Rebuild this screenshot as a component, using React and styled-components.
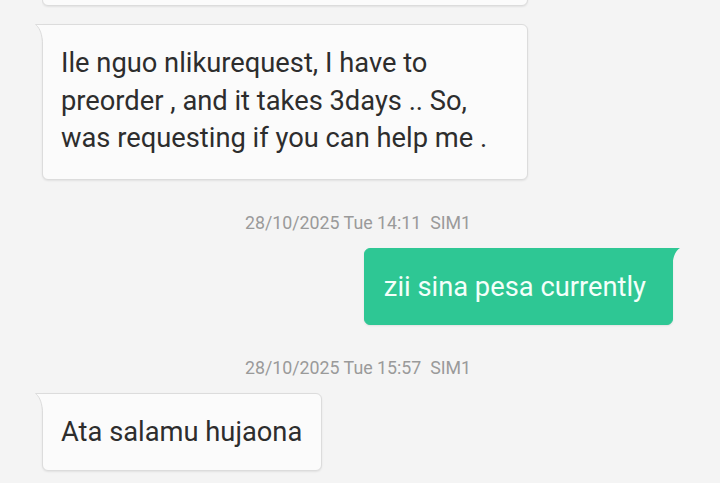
import React from "react";
import styled, { createGlobalStyle } from "styled-components";

const GlobalStyle = createGlobalStyle`
  html, body {
    margin: 0;
    padding: 0;
    background: #f4f4f4;
    font-family: Roboto, "Noto Sans", sans-serif;
  }
`;

const messages = [
  { type: "time", text: "28/10/2025 Tue 14:11\u00a0\u00a0SIM1" },
  { type: "out", text: "zii sina pesa currently" },
  { type: "time", text: "28/10/2025 Tue 15:57\u00a0\u00a0SIM1" },
  { type: "in", text: "Ata salamu hujaona" },
];

// little corner flag on the bubble
const Tail = ({ side }) =>
  side === "in" ? (
    <TailSvg side={side} width="9" height="18" viewBox="0 0 9 18">
      <path d="M9 0.5 L0.5 0.5 C3.5 3 6.5 7 7.5 17.5 L9 17.5 Z" fill="#fbfbfb" />
      <path d="M9 0.5 L0.5 0.5 C3.5 3 6.5 7 7.5 17.5" fill="none" stroke="#dcdcdc" strokeWidth="1" />
    </TailSvg>
  ) : (
    <TailSvg side={side} width="9" height="16" viewBox="0 0 9 16">
      <path d="M0 0 L9 0 C5.5 2.5 2.5 6 1.5 16 L0 16 Z" fill="#2ec794" />
    </TailSvg>
  );

const App = () => {
  return (
    <>
      <GlobalStyle />
      <Thread>
        {/* previous message, scrolled mostly out of view */}
        <Row side="in">
          <Cut>
            <Bubble side="in" tall />
          </Cut>
        </Row>
        <Row side="in">
          <Bubble side="in" tall>
            <Tail side="in" />
            Ile nguo nlikurequest, I have to preorder , and it takes 3days .. So, was requesting if you can help me .
          </Bubble>
        </Row>
        {messages.map((m, i) =>
          m.type === "time" ? (
            <Stamp key={i}>{m.text}</Stamp>
          ) : (
            <Row key={i} side={m.type}>
              <Bubble side={m.type}>
                <Tail side={m.type} />
                {m.text}
              </Bubble>
            </Row>
          )
        )}
      </Thread>
    </>
  );
};

const Thread = styled.div`
  width: 720px;
  height: 483px;
  overflow: hidden;
  display: flex;
  flex-direction: column;
`;

const Row = styled.div`
  display: flex;
  justify-content: ${(p) => (p.side === "out" ? "flex-end" : "flex-start")};
  padding-left: 42px;
  padding-right: 47px;
  margin-top: 16px;

  &:first-child {
    margin-top: 0;
  }
`;

const Cut = styled.div`
  box-sizing: border-box;
  height: 8px;
  width: 488px;
  padding: 0 2px 2px 0;
  overflow: hidden;
  display: flex;
  flex-direction: column;
  justify-content: flex-end;
  flex-shrink: 0;

  & > div {
    flex-shrink: 0;
    height: 60px;
    width: 486px;
  }
`;

const Bubble = styled.div`
  position: relative;
  box-sizing: border-box;
  max-width: 486px;
  font-size: 27.3px;
  line-height: 37.5px;
  padding: 20px ${(p) => (p.side === "out" ? "26px" : "19px")} ${(p) => (p.tall ? "21px" : "18px")}
    ${(p) => (p.side === "out" ? "19px" : "18px")};
  border-radius: 6px;
  color: ${(p) => (p.side === "out" ? "#f4fffa" : "#2d2d2d")};
  background: ${(p) => (p.side === "out" ? "#2ec794" : "#fbfbfb")};
  border: 1px solid ${(p) => (p.side === "out" ? "#2ec794" : "#dcdcdc")};
  border-top-left-radius: ${(p) => (p.side === "in" ? "0" : "6px")};
  border-top-right-radius: ${(p) => (p.side === "out" ? "0" : "6px")};
  box-shadow: 0 1px 2px rgba(0, 0, 0, 0.08);
`;

const TailSvg = styled.svg`
  position: absolute;
  top: -1px;
  ${(p) => (p.side === "in" ? "left: -8px;" : "right: -8px;")}
  display: block;
`;

const Stamp = styled.div`
  text-align: center;
  font-size: 17.8px;
  line-height: 20px;
  color: #9a9a9a;
  margin-top: 33px;
  margin-bottom: -1px;
  padding-right: 4px;
`;

export default App;
